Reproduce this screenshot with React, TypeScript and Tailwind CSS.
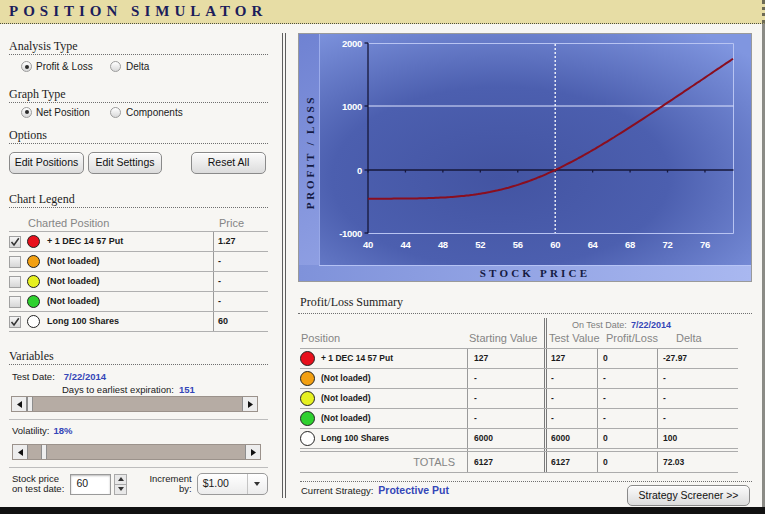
import React from "react";

const SANS = "font-['Liberation_Sans',Arial,sans-serif]";
const SERIF = "font-['Liberation_Serif','Times_New_Roman',serif]";

function ncdf(x: number) {
  const t = 1 / (1 + 0.2316419 * Math.abs(x));
  const d = 0.3989423 * Math.exp((-x * x) / 2);
  const p = d * t * (0.3193815 + t * (-0.3565638 + t * (1.781478 + t * (-1.821256 + t * 1.330274))));
  return x > 0 ? 1 - p : p;
}
function put(S: number) {
  const K = 57, T = 151 / 365, v = 0.18, r = 0.005;
  const d1 = (Math.log(S / K) + (r + (v * v) / 2) * T) / (v * Math.sqrt(T));
  const d2 = d1 - v * Math.sqrt(T);
  return K * Math.exp(-r * T) * ncdf(-d2) - S * ncdf(-d1);
}
const base = put(60);
const pts: string[] = [];
for (let s = 40; s <= 79.001; s += 0.25) {
  const pl = 100 * (s - 60) + 100 * (put(s) - base);
  pts.push(`${(70 + (s - 40) * 9.36).toFixed(1)},${(137 - pl * 0.0633).toFixed(1)}`);
}
const curve = "M" + pts.join(" L");

function Title({ children, className = "" }: { children: React.ReactNode; className?: string }) {
  return (
    <div className={`flex items-center border-b border-dotted border-[#6f6f6f] text-[12px] text-[#1d1d1d] ${SERIF} ${className}`}>
      {children}
    </div>
  );
}

function Radio({ checked }: { checked?: boolean }) {
  return (
    <span className="flex h-[11px] w-[11px] items-center justify-center rounded-full border border-[#9c9c9c] bg-linear-to-b from-[#ffffff] to-[#d9d9d9]">
      {checked && <span className="h-[4px] w-[4px] rounded-full bg-[#2a2a2a]" />}
    </span>
  );
}

function Check({ checked }: { checked?: boolean }) {
  return (
    <span className="flex h-[12px] w-[12px] items-center justify-center border border-[#a0a0a0] bg-linear-to-b from-[#f6f6f6] to-[#d6d6d6]">
      {checked && (
        <svg width="10" height="10" viewBox="0 0 10 10">
          <path d="M1.5 5 L4 8 L8.8 1.2" fill="none" stroke="#333" strokeWidth="1.5" />
        </svg>
      )}
    </span>
  );
}

function Dot({ color, size }: { color: string; size: number }) {
  return (
    <span
      className="block shrink-0 rounded-full border border-[#222]"
      style={{ width: size, height: size, background: color }}
    />
  );
}

function Arrow({ dir }: { dir: "l" | "r" }) {
  return (
    <svg width="5" height="7" viewBox="0 0 5 7">
      {dir === "l" ? <polygon points="5,0 0,3.5 5,7" fill="#111" /> : <polygon points="0,0 5,3.5 0,7" fill="#111" />}
    </svg>
  );
}

function Slider({ offset }: { offset: number }) {
  return (
    <div className="flex h-[16px] w-full border border-[#9b928b] bg-[#b6aca4]">
      <div className="flex w-[15px] items-center justify-center border-r border-[#8d8d8d] bg-[#ededed]">
        <Arrow dir="l" />
      </div>
      <div className="h-full w-[6px] border-x border-[#8d8d8d] bg-[#eeeeee]" style={{ marginLeft: offset }} />
      <div className="flex-1" />
      <div className="flex w-[15px] items-center justify-center border-l border-[#8d8d8d] bg-[#ededed]">
        <Arrow dir="r" />
      </div>
    </div>
  );
}

function Btn({ children, className = "" }: { children: React.ReactNode; className?: string }) {
  return (
    <div
      className={`flex items-center justify-center rounded-[5px] border border-[#8a8a8a] bg-linear-to-b from-[#fbfbfb] to-[#dcdcdc] text-[10.5px] text-[#111] shadow-[inset_0_1px_0_#ffffff] ${className}`}
    >
      {children}
    </div>
  );
}

const legendRows = [
  { c: "#e8101c", name: "+ 1 DEC 14 57 Put", price: "1.27", checked: true },
  { c: "#f2a012", name: "(Not loaded)", price: "-" },
  { c: "#e6f020", name: "(Not loaded)", price: "-" },
  { c: "#2fd12f", name: "(Not loaded)", price: "-" },
  { c: "#ffffff", name: "Long 100 Shares", price: "60", checked: true },
];

const sumRows = [
  { c: "#e8101c", name: "+ 1 DEC 14 57 Put", v: ["127", "127", "0", "-27.97"] },
  { c: "#f2a012", name: "(Not loaded)", v: ["-", "-", "-", "-"] },
  { c: "#e6f020", name: "(Not loaded)", v: ["-", "-", "-", "-"] },
  { c: "#2fd12f", name: "(Not loaded)", v: ["-", "-", "-", "-"] },
  { c: "#ffffff", name: "Long 100 Shares", v: ["6000", "6000", "0", "100"] },
];

function Chart() {
  const xs = [40, 44, 48, 52, 56, 60, 64, 68, 72, 76];
  const X = (v: number) => 70 + (v - 40) * 9.36;
  const ys: [string, number][] = [
    ["2000", 10],
    ["1000", 73],
    ["0", 137],
    ["-1000", 200],
  ];
  return (
    <svg width="454" height="249" viewBox="0 0 454 249" className="block">
      <defs>
        <linearGradient id="outerG" x1="0" y1="0" x2="1" y2="1">
          <stop offset="0" stopColor="#6f82d2" />
          <stop offset="1" stopColor="#aebcf3" />
        </linearGradient>
        <radialGradient id="innerG" cx="0.42" cy="0.62" r="0.78">
          <stop offset="0" stopColor="#4354a2" />
          <stop offset="0.5" stopColor="#4c5faf" />
          <stop offset="1" stopColor="#8096e0" />
        </radialGradient>
        <linearGradient id="botG" x1="0" y1="0" x2="1" y2="0">
          <stop offset="0" stopColor="#7f92da" />
          <stop offset="1" stopColor="#a9b8f0" />
        </linearGradient>
      </defs>
      <rect x="0.5" y="0.5" width="453" height="248" fill="url(#outerG)" stroke="#9a9a9a" />
      <rect x="1" y="232" width="452" height="16" fill="url(#botG)" />
      <rect x="21" y="1" width="432" height="231" fill="url(#innerG)" />
      <line x1="21.5" y1="1" x2="21.5" y2="232" stroke="#a9b8f2" strokeOpacity="0.8" />
      <line x1="21" y1="232.5" x2="453" y2="232.5" stroke="#b9c6f6" strokeOpacity="0.9" />
      <polyline points="70,10.5 435.5,10.5 435.5,200.5 70,200.5" fill="none" stroke="#b8c4f2" strokeWidth="1" />
      <line x1="70" y1="73" x2="435.5" y2="73" stroke="#dfe5ff" strokeWidth="1" />
      <line x1={X(60)} y1="11" x2={X(60)} y2="200" stroke="#ffffff" strokeWidth="1.3" strokeDasharray="2 2" />
      <line x1="70" y1="137" x2="435.5" y2="137" stroke="#16173a" strokeWidth="1.5" />
      {xs.map((v) => (
        <line key={v} x1={X(v)} y1="137" x2={X(v)} y2="139.5" stroke="#16173a" strokeWidth="1.3" />
      ))}
      <line x1="70" y1="10" x2="70" y2="200.5" stroke="#16173a" strokeWidth="1.3" />
      {ys.map(([t, y]) => (
        <line key={t} x1="66.5" y1={y} x2="70" y2={y} stroke="#16173a" strokeWidth="1.3" />
      ))}
      <path d={curve} fill="none" stroke="#8a0e1f" strokeWidth="2" strokeLinejoin="round" />
      {ys.map(([t, y]) => (
        <text
          key={t}
          x="64"
          y={y + 3.5}
          textAnchor="end"
          fill="#ffffff"
          fontSize="9.5"
          fontWeight="bold"
          letterSpacing="-0.3"
          fontFamily="'Liberation Sans', Arial, sans-serif"
        >
          {t}
        </text>
      ))}
      {xs.map((v) => (
        <text
          key={v}
          x={X(v)}
          y="214.5"
          textAnchor="middle"
          fill="#ffffff"
          fontSize="9.5"
          fontWeight="bold"
          letterSpacing="-0.3"
          fontFamily="'Liberation Sans', Arial, sans-serif"
        >
          {v}
        </text>
      ))}
      <text
        x="0"
        y="0"
        transform="translate(15.5 119) rotate(-90)"
        textAnchor="middle"
        fill="#141a42"
        fontSize="11"
        fontWeight="bold"
        letterSpacing="2.8"
        fontFamily="'Liberation Serif', 'Times New Roman', serif"
      >
        PROFIT / LOSS
      </text>
      <text
        x="237"
        y="244"
        textAnchor="middle"
        fill="#141a42"
        fontSize="11"
        fontWeight="bold"
        letterSpacing="3.2"
        fontFamily="'Liberation Serif', 'Times New Roman', serif"
      >
        STOCK PRICE
      </text>
    </svg>
  );
}

export default function App() {
  return (
    <div className={`flex h-[514px] w-[765px] flex-col overflow-hidden bg-[#f7f6f3] text-[#1a1a1a] ${SANS}`}>
      {/* header */}
      <div className="flex h-[24px] shrink-0 items-center border-b border-dotted border-r-[3px] border-b-[#4e4e40] border-r-[#6d6a55] bg-[#e7dda5] pl-[9px]">
        <span className={`text-[15px] font-bold tracking-[5px] text-[#1c1d5b] ${SERIF}`}>POSITION SIMULATOR</span>
      </div>

      <div className="flex h-[483px] shrink-0 border-r-[3px] border-[#8b8b86]">
        {/* left panel */}
        <div className="flex w-[282px] shrink-0 flex-col pl-[9px] pr-[14px]">
          <Title className="mt-[14px] h-[17px]">Analysis Type</Title>
          <div className="flex h-[23px] items-center pl-[12px] text-[10px]">
            <div className="flex w-[89px] items-center gap-[4px]">
              <Radio checked />
              <span>Profit &amp; Loss</span>
            </div>
            <div className="flex items-center gap-[5px]">
              <Radio />
              <span>Delta</span>
            </div>
          </div>

          <Title className="mt-[8px] h-[17px]">Graph Type</Title>
          <div className="flex h-[18px] items-center pl-[12px] text-[10px]">
            <div className="flex w-[89px] items-center gap-[4px]">
              <Radio checked />
              <span>Net Position</span>
            </div>
            <div className="flex items-center gap-[5px]">
              <Radio />
              <span>Components</span>
            </div>
          </div>

          <Title className="mt-[6px] h-[17px]">Options</Title>
          <div className="mt-[8px] flex h-[22px]">
            <Btn className="w-[75px]">Edit Positions</Btn>
            <Btn className="ml-[4px] w-[74px]">Edit Settings</Btn>
            <Btn className="ml-auto mr-[2px] w-[75px]">Reset All</Btn>
          </div>

          <Title className="mt-[17px] h-[17px]">Chart Legend</Title>
          <div className="flex h-[24px] items-end border-b border-[#b0b0b0] text-[11px] text-[#858585]">
            <span className="w-[204px] pl-[19px]">Charted Position</span>
            <span className="pl-[6px]">Price</span>
          </div>
          {legendRows.map((r, i) => (
            <div key={i} className="flex h-[20px] items-stretch border-b border-[#b0b0b0] text-[9px] font-bold">
              <div className="flex w-[204px] items-center">
                <Check checked={r.checked} />
                <span className="ml-[6px]">
                  <Dot color={r.c} size={13} />
                </span>
                <span className="ml-[7px]">{r.name}</span>
              </div>
              <div className="flex flex-1 items-center border-l border-[#9a9a9a] pl-[4px]">{r.price}</div>
            </div>
          ))}

          <Title className="mt-[16px] h-[17px]">Variables</Title>
          <div className="mt-[6px] flex h-[13px] items-center pl-[3px] text-[9.5px]">
            <span>Test Date:</span>
            <span className="ml-[9px] font-bold text-[#3446b8]">7/22/2014</span>
          </div>
          <div className="flex h-[12px] items-center pl-[53px] text-[9.5px]">
            <span>Days to earliest expiration:</span>
            <span className="ml-[5px] font-bold text-[#3446b8]">151</span>
          </div>
          <div className="ml-[2px] w-[247px]">
            <Slider offset={0} />
          </div>
          <div className="h-[8px] border-b border-[#bdbdbd]" />
          <div className="mt-[4px] flex h-[14px] items-center pl-[3px] text-[9.5px]">
            <span>Volatility:</span>
            <span className="ml-[4px] font-bold text-[#3446b8]">18%</span>
          </div>
          <div className="ml-[3px] mt-[6px] w-[249px]">
            <Slider offset={13} />
          </div>
          <div className="h-[8px] border-b border-[#bdbdbd]" />
          <div className="mt-[5px] flex h-[22px] items-center text-[9.5px]">
            <div className="w-[62px] pl-[3px] leading-[10.5px]">
              Stock price
              <br />
              on test date:
            </div>
            <div className="flex h-[21px] w-[41px] items-center border border-[#9a9a9a] bg-white pl-[5px] text-[10.5px] shadow-[inset_0_1px_2px_#bbbbbb]">
              60
            </div>
            <div className="ml-[3px] flex h-[21px] w-[13px] flex-col">
              <div className="flex flex-1 items-center justify-center border border-[#a9a9a9] bg-[#e8e8e8]">
                <svg width="6" height="4" viewBox="0 0 6 4">
                  <polygon points="0,4 3,0 6,4" fill="#333" />
                </svg>
              </div>
              <div className="flex flex-1 items-center justify-center border border-t-0 border-[#a9a9a9] bg-[#e8e8e8]">
                <svg width="6" height="4" viewBox="0 0 6 4">
                  <polygon points="0,0 3,4 6,0" fill="#333" />
                </svg>
              </div>
            </div>
            <div className="ml-[20px] w-[45px] text-right leading-[10.5px]">
              Increment
              <br />
              by:
            </div>
            <div className="ml-[5px] flex h-[22px] w-[72px] items-stretch rounded-[5px] border border-[#9a9a9a] bg-linear-to-b from-[#ffffff] to-[#ececec] text-[10.5px]">
              <div className="flex flex-1 items-center pl-[5px]">$1.00</div>
              <div className="flex w-[20px] items-center justify-center border-l border-[#c4c4c4]">
                <svg width="6" height="4" viewBox="0 0 6 4">
                  <polygon points="0,0 3,4 6,0" fill="#333" />
                </svg>
              </div>
            </div>
          </div>
        </div>

        {/* separator */}
        <div className="mt-[9px] h-[465px] w-[4px] shrink-0 border-x border-[#5e5e5e]" />

        {/* right panel */}
        <div className="flex w-[473px] shrink-0 flex-col pl-[12px]">
          <div className="mt-[9px]">
            <Chart />
          </div>

          <Title className="mt-[11px] h-[21px] w-[454px] pb-[3px] pl-[2px]">Profit/Loss Summary</Title>

          <div className="ml-[2px] w-[438px]">
            <div className="h-[4px]" />
            <div className="flex h-[13px]">
              <div className="w-[244px]" />
              <div className="flex flex-1 items-end border-l-[3px] border-double border-[#7a7a7a] pl-[25px] text-[9px] leading-[12px] text-[#7d7d7d]">
                <span>On Test Date:</span>
                <span className="ml-[4px] font-bold text-[#3446b8]">7/22/2014</span>
              </div>
            </div>
            <div className="flex h-[18px] border-b border-[#acacac] text-[11px] leading-[14px] text-[#858585]">
              <div className="w-[167px] pl-[1px]">Position</div>
              <div className="w-[77px] whitespace-nowrap pl-[2px]">Starting Value</div>
              <div className="w-[53px] whitespace-nowrap border-l-[3px] border-double border-[#7a7a7a] pl-[2px]">
                Test Value
              </div>
              <div className="w-[60px] whitespace-nowrap pl-[9px]">Profit/Loss</div>
              <div className="w-[81px] pl-[19px]">Delta</div>
            </div>
            {sumRows.map((r, i) => (
              <div key={i} className="flex h-[20px] border-b border-[#acacac] text-[8.5px] font-bold">
                <div className="flex w-[167px] items-center">
                  <Dot color={r.c} size={15} />
                  <span className="ml-[6px]">{r.name}</span>
                </div>
                <div className="flex w-[77px] items-center border-l border-[#9a9a9a] pl-[6px]">{r.v[0]}</div>
                <div className="flex w-[53px] items-center border-l-[3px] border-double border-[#7a7a7a] pl-[4px]">
                  {r.v[1]}
                </div>
                <div className="flex w-[60px] items-center border-l border-[#9a9a9a] pl-[5px]">{r.v[2]}</div>
                <div className="flex w-[81px] items-center border-l border-[#9a9a9a] pl-[5px]">{r.v[3]}</div>
              </div>
            ))}
            <div className="flex h-[2px]">
              <div className="w-[167px]" />
              <div className="w-[77px] border-l border-[#9a9a9a]" />
              <div className="w-[53px] border-l-[3px] border-double border-[#7a7a7a]" />
            </div>
            <div className="flex h-[22px] border-y border-[#acacac] text-[8.5px] font-bold">
              <div className="flex w-[167px] items-center justify-end pr-[12px] text-[11px] font-normal text-[#858585]">
                TOTALS
              </div>
              <div className="flex w-[77px] items-center border-l border-[#9a9a9a] pl-[6px]">6127</div>
              <div className="flex w-[53px] items-center border-l-[3px] border-double border-[#7a7a7a] pl-[4px]">6127</div>
              <div className="flex w-[60px] items-center border-l border-[#9a9a9a] pl-[5px]">0</div>
              <div className="flex w-[81px] items-center border-l border-[#9a9a9a] pl-[5px]">72.03</div>
            </div>
          </div>

          <div className="ml-[2px] h-[9px] w-[452px] border-b border-dotted border-[#6f6f6f]" />
          <div className="mt-[2px] flex w-[454px] items-start">
            <div className="flex h-[14px] items-center pl-[3px] text-[9.5px]">
              <span>Current Strategy:</span>
              <span className="ml-[5px] text-[10.5px] font-bold text-[#3446b8]">Protective Put</span>
            </div>
            <Btn className="ml-auto mr-[2px] mt-[1px] h-[21px] w-[123px]">Strategy Screener &gt;&gt;</Btn>
          </div>
        </div>
      </div>

      <div className="flex-1 bg-[#111111]" />
    </div>
  );
}
